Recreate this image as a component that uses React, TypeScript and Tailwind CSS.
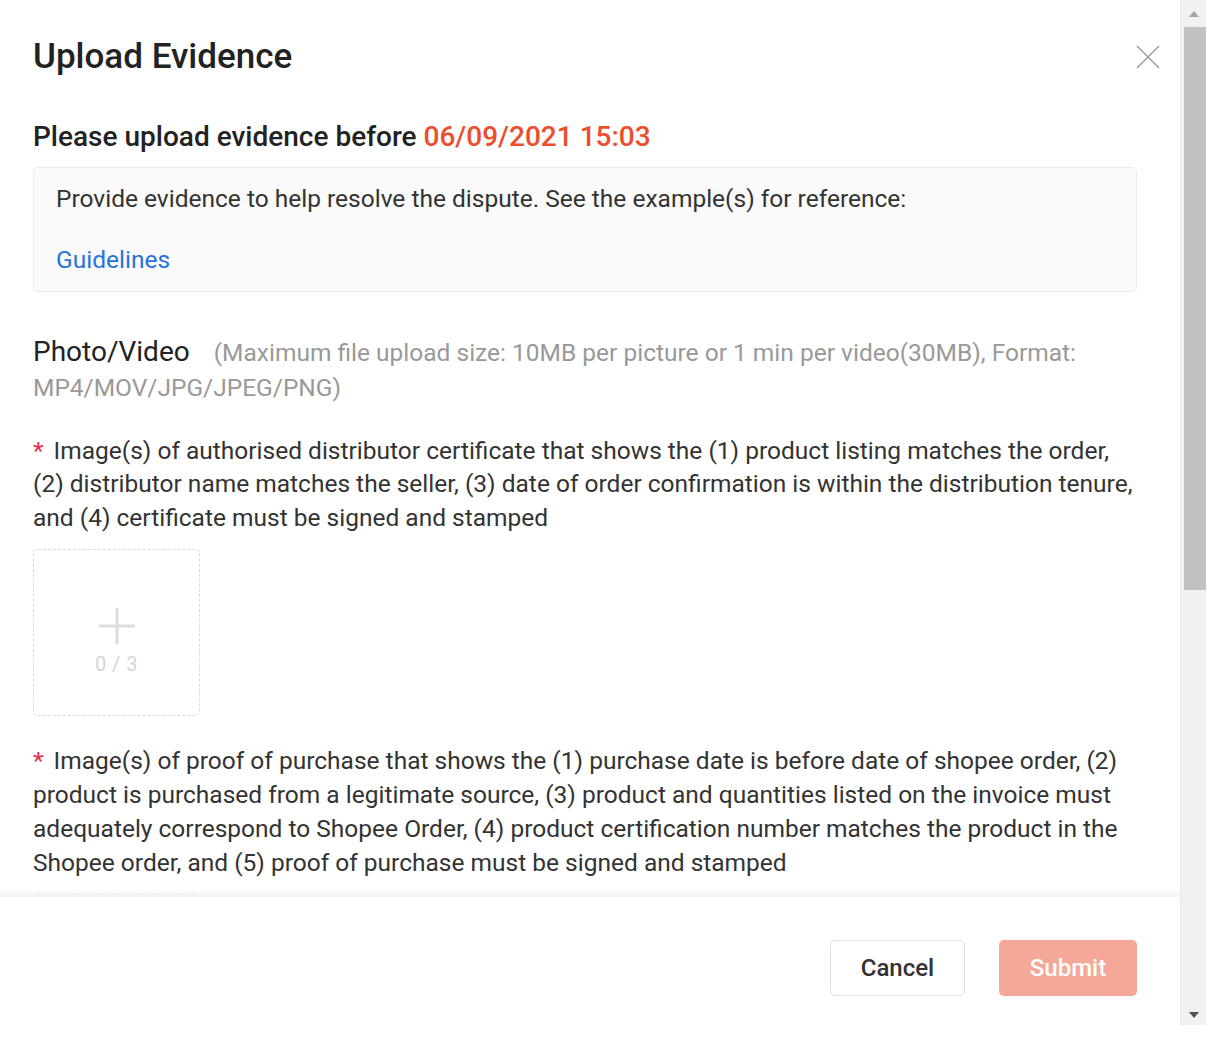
import React from "react";

function UploadBox() {
  return (
    <div className="w-[167px] h-[167px] border border-dashed border-[#d9d9d9] rounded-[5px] flex flex-col items-center justify-center shrink-0">
      <svg width="40" height="40" viewBox="0 0 40 40" className="mt-[16px]">
        <path d="M20 2 V38 M2 20 H38" stroke="#dcdcdc" strokeWidth="3" fill="none" />
      </svg>
      <div className="text-[20px] leading-[24px] text-[#d5d5d5] mt-[6px] tracking-[0.5px]">0 / 3</div>
    </div>
  );
}

export default function App() {
  return (
    <div className="w-[1228px] h-[1040px] bg-white flex" style={{ fontFamily: "Roboto, 'Liberation Sans', sans-serif" }}>
      <div className="w-[1180px] h-[1025px] flex flex-col">
        {/* body */}
        <div className="h-[897px] overflow-hidden pl-[33px] pr-[43px] relative">
          <div className="flex items-start justify-between pt-[36px]">
            <h1 className="text-[35px] leading-[42px] font-medium text-[#222]">Upload Evidence</h1>
            <button className="mt-[9px] mr-[-23px] w-[24px] h-[24px] flex items-center justify-center">
              <svg width="24" height="24" viewBox="0 0 24 24">
                <path d="M1 1 L23 23 M23 1 L1 23" stroke="#999" strokeWidth="1.4" fill="none" />
              </svg>
            </button>
          </div>
          <div className="mt-[42px] text-[28px] leading-[34px] font-medium text-[#222]">
            Please upload evidence before <span className="text-[#ee4d2d]">06/09/2021 15:03</span>
          </div>
          <div className="mt-[13px] bg-[#fafafa] border border-[#ebebeb] rounded-[5px] px-[22px] pt-[13.5px] pb-[15.5px]">
            <div className="text-[24.5px] leading-[33px] text-[#333]">
              Provide evidence to help resolve the dispute. See the example(s) for reference:
            </div>
            <div className="mt-[28px] text-[24.5px] leading-[33px] text-[#2673dd]">Guidelines</div>
          </div>
          <div className="mt-[42.5px] text-[24.5px] leading-[35px]">
            <span className="text-[28px] leading-[20px] text-[#222] mr-[24px]">Photo/Video</span>
            <span className="text-[#999]">
              (Maximum file upload size: 10MB per picture or 1 min per video(30MB), Format: MP4/MOV/JPG/JPEG/PNG)
            </span>
          </div>
          <div className="mt-[29px] text-[24.5px] leading-[33.5px] text-[#333]">
            <span className="text-[#ee2c4a] mr-[10px]">*</span>
            Image(s) of authorised distributor certificate that shows the (1) product listing matches the order, (2) distributor name matches the seller, (3) date of order confirmation is within the distribution tenure, and (4) certificate must be signed and stamped
          </div>
          <div className="mt-[15px]">
            <UploadBox />
          </div>
          <div className="mt-[28px] text-[24.5px] leading-[34px] text-[#333]">
            <span className="text-[#ee2c4a] mr-[10px]">*</span>
            Image(s) of proof of purchase that shows the (1) purchase date is before date of shopee order, (2) product is purchased from a legitimate source, (3) product and quantities listed on the invoice must adequately correspond to Shopee Order, (4) product certification number matches the product in the Shopee order, and (5) proof of purchase must be signed and stamped
          </div>
          <div className="mt-[14px]">
            <UploadBox />
          </div>
        </div>
        {/* footer */}
        <div className="relative flex-1 flex items-start justify-end gap-[34px] pr-[43px] pt-[43px] bg-white">
          <div className="absolute left-0 right-0 top-[-8px] h-[8px] bg-gradient-to-b from-transparent to-[#f2f2f2]"></div>
          <button className="w-[135px] h-[56px] border border-[#e0e0e0] rounded-[5px] bg-white text-[24px] font-medium text-[#333]">
            Cancel
          </button>
          <button className="w-[138px] h-[56px] rounded-[5px] bg-[#f6a898] text-[24px] font-medium text-white">
            Submit
          </button>
        </div>
      </div>
      {/* scrollbar */}
      <div className="w-[26px] h-[1025px] bg-[#f1f1f1] border-l border-[#e8e8e8] flex flex-col items-center">
        <div className="h-[27px] w-full flex items-center justify-center">
          <svg width="12" height="8" viewBox="0 0 12 8">
            <path d="M6 1 L11 7 L1 7 Z" fill="#a3a3a3" />
          </svg>
        </div>
        <div className="w-[22px] h-[563px] bg-[#c1c1c1] ml-[2px]"></div>
        <div className="flex-1"></div>
        <div className="h-[20px] w-full flex items-center justify-center">
          <svg width="12" height="8" viewBox="0 0 12 8">
            <path d="M1 1 L11 1 L6 7 Z" fill="#505050" />
          </svg>
        </div>
      </div>
    </div>
  );
}
